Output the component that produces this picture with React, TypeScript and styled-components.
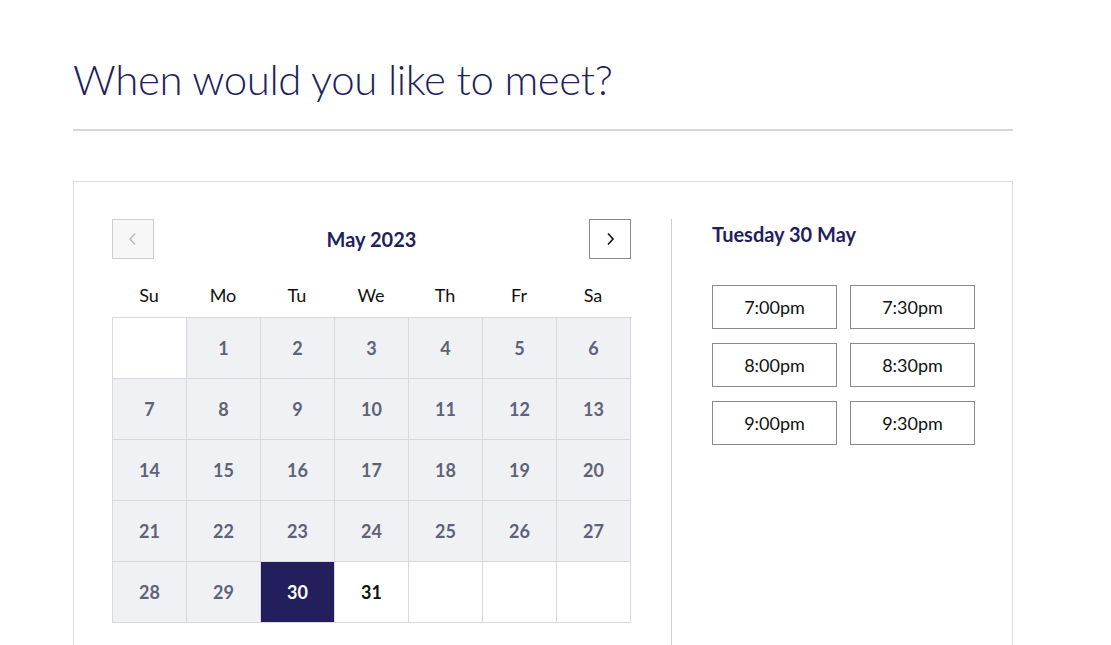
import React from 'react';
import styled, { createGlobalStyle } from 'styled-components';

const GlobalStyle = createGlobalStyle`
  body {
    margin: 0;
    background: #fff;
    font-family: "Source Sans Pro", Lato, "Noto Sans", sans-serif;
  }
`;

const NAVY = '#231f5c';

const Page = styled.div`
  padding: 51px 0 0 73px;
  width: 940px;
  height: 594px;
  overflow: hidden;
`;

const Title = styled.h1`
  margin: 0;
  font-size: 42px;
  font-weight: 300;
  letter-spacing: -0.4px;
  color: ${NAVY};
  line-height: 56px;
`;

const Rule = styled.hr`
  margin: 22px 0 0;
  border: none;
  border-top: 2px solid #d6d6d6;
`;

const Card = styled.div`
  margin-top: 50px;
  border: 1px solid #dcdcdc;
  border-bottom: none;
  padding: 37px 0 0 38px;
  display: flex;
  height: 500px;
`;

const Calendar = styled.div`
  width: 519px;
`;

const Header = styled.div`
  display: flex;
  align-items: center;
  justify-content: space-between;
`;

const NavButton = styled.button<{ $disabled?: boolean }>`
  width: 42px;
  height: 40px;
  padding: 0;
  display: flex;
  align-items: center;
  justify-content: center;
  background: ${p => (p.$disabled ? '#f7f7f7' : '#fff')};
  border: 1px solid ${p => (p.$disabled ? '#cfcfcf' : '#8a8a8a')};
  color: ${p => (p.$disabled ? '#bdbdbd' : '#111')};
`;

const Month = styled.div`
  font-size: 20px;
  font-weight: 700;
  color: ${NAVY};
`;

const Weekdays = styled.div`
  display: grid;
  grid-template-columns: repeat(7, 74px);
  margin: 22px 0 8px;
`;

const Weekday = styled.div`
  text-align: center;
  font-size: 18px;
  line-height: 28px;
  color: #111;
`;

const Grid = styled.div`
  display: grid;
  grid-template-columns: repeat(7, 74px);
  border-top: 1px solid #d9d9d9;
  border-left: 1px solid #d9d9d9;
  width: 519px;
`;

type CellKind = 'empty' | 'past' | 'selected' | 'open';

const Cell = styled.div<{ $kind: CellKind }>`
  height: 60px;
  border-right: 1px solid #d9d9d9;
  border-bottom: 1px solid #d9d9d9;
  display: flex;
  align-items: center;
  justify-content: center;
  font-size: 18px;
  font-weight: 700;
  background: ${p =>
    p.$kind === 'past' ? '#f0f1f5' : p.$kind === 'selected' ? NAVY : '#fff'};
  color: ${p =>
    p.$kind === 'past' ? '#5e6377' : p.$kind === 'selected' ? '#fff' : '#111'};
`;

const Divider = styled.div`
  width: 1px;
  background: #cfcfcf;
  margin-left: 40px;
`;

const Slots = styled.div`
  padding-left: 40px;
`;

const DayTitle = styled.div`
  font-size: 20px;
  font-weight: 700;
  color: ${NAVY};
  line-height: 30px;
`;

const TimeGrid = styled.div`
  display: grid;
  grid-template-columns: repeat(2, 125px);
  column-gap: 13px;
  row-gap: 14px;
  margin-top: 36px;
`;

const TimeButton = styled.button`
  height: 44px;
  background: #fff;
  border: 1px solid #8a8a8a;
  font-family: inherit;
  font-size: 18px;
  color: #111;
  padding: 0;
`;

const Chevron = ({ dir }: { dir: 'left' | 'right' }) => (
  <svg width="10" height="14" viewBox="0 0 10 14" fill="none">
    <path
      d={dir === 'left' ? 'M7 1.5L2 7l5 5.5' : 'M3 1.5L8 7l-5 5.5'}
      stroke="currentColor"
      strokeWidth="1.6"
    />
  </svg>
);

const weekdays = ['Su', 'Mo', 'Tu', 'We', 'Th', 'Fr', 'Sa'];
const times = ['7:00pm', '7:30pm', '8:00pm', '8:30pm', '9:00pm', '9:30pm'];

const days: { label: string; kind: CellKind }[] = [];
days.push({ label: '', kind: 'empty' });
for (let d = 1; d <= 31; d++) {
  days.push({
    label: String(d),
    kind: d < 30 ? 'past' : d === 30 ? 'selected' : 'open',
  });
}
while (days.length < 35) days.push({ label: '', kind: 'empty' });

export default function App() {
  return (
    <>
      <GlobalStyle />
      <Page>
        <Title>When would you like to meet?</Title>
        <Rule />
        <Card>
          <Calendar>
            <Header>
              <NavButton $disabled>
                <Chevron dir="left" />
              </NavButton>
              <Month>May 2023</Month>
              <NavButton>
                <Chevron dir="right" />
              </NavButton>
            </Header>
            <Weekdays>
              {weekdays.map(w => (
                <Weekday key={w}>{w}</Weekday>
              ))}
            </Weekdays>
            <Grid>
              {days.map((d, i) => (
                <Cell key={i} $kind={d.kind}>
                  {d.label}
                </Cell>
              ))}
            </Grid>
          </Calendar>
          <Divider />
          <Slots>
            <DayTitle>Tuesday 30 May</DayTitle>
            <TimeGrid>
              {times.map(t => (
                <TimeButton key={t}>{t}</TimeButton>
              ))}
            </TimeGrid>
          </Slots>
        </Card>
      </Page>
    </>
  );
}
